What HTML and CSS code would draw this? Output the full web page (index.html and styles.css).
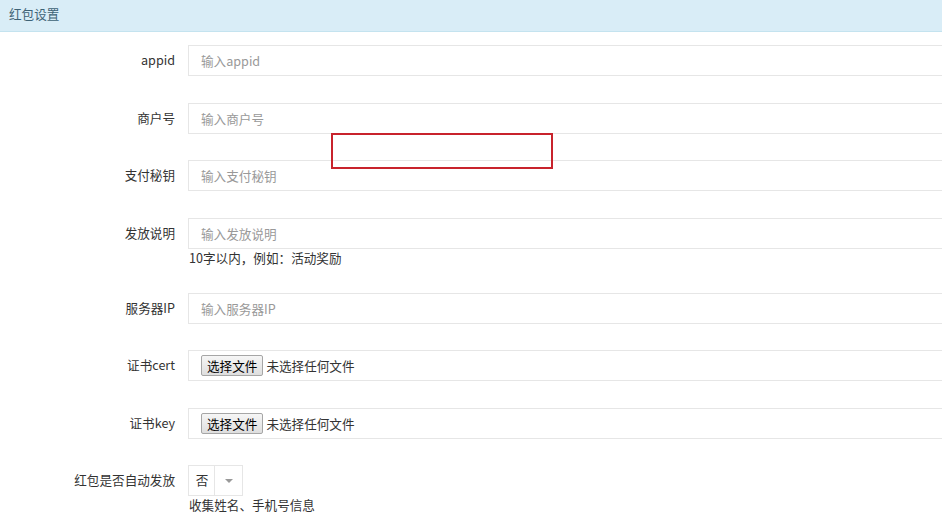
FILE: index.html
```html
<!DOCTYPE html>
<html lang="zh-CN">
<head>
    <meta charset="UTF-8">
    <title>红包设置</title>
    <link rel="stylesheet" href="styles.css">
</head>
<body>
    <div class="panel">
        <div class="panel-heading">红包设置</div>
        <form class="panel-body">
            <div class="form-row">
                <label class="form-label">appid</label>
                <div class="form-field">
                    <input class="form-input" type="text" placeholder="输入appid">
                </div>
            </div>
            <div class="form-row">
                <label class="form-label">商户号</label>
                <div class="form-field">
                    <input class="form-input" type="text" placeholder="输入商户号">
                </div>
            </div>
            <div class="form-row">
                <label class="form-label">支付秘钥</label>
                <div class="form-field">
                    <input class="form-input" type="text" placeholder="输入支付秘钥">
                </div>
            </div>
            <div class="form-row">
                <label class="form-label">发放说明</label>
                <div class="form-field">
                    <input class="form-input" type="text" placeholder="输入发放说明">
                    <div class="help">10字以内，例如：活动奖励</div>
                </div>
            </div>
            <div class="form-row">
                <label class="form-label">服务器IP</label>
                <div class="form-field">
                    <input class="form-input" type="text" placeholder="输入服务器IP">
                </div>
            </div>
            <div class="form-row">
                <label class="form-label">证书cert</label>
                <div class="form-field">
                    <div class="file-box">
                        <button type="button" class="file-btn">选择文件</button>
                        <span class="file-name">未选择任何文件</span>
                    </div>
                </div>
            </div>
            <div class="form-row">
                <label class="form-label">证书key</label>
                <div class="form-field">
                    <div class="file-box">
                        <button type="button" class="file-btn">选择文件</button>
                        <span class="file-name">未选择任何文件</span>
                    </div>
                </div>
            </div>
            <div class="form-row">
                <label class="form-label">红包是否自动发放</label>
                <div class="form-field">
                    <div class="select">
                        <span class="select-value">否</span>
                        <span class="select-arrow"></span>
                    </div>
                    <div class="help">收集姓名、手机号信息</div>
                </div>
            </div>
        </form>
        <!-- 标注框 -->
        <div class="mark-box"></div>
    </div>
</body>
</html>
```

FILE: styles.css
```css
html, body {
    margin: 0;
    padding: 0;
    overflow: hidden;
    background: #fff;
}

body {
    font-family: "Microsoft YaHei", "Noto Sans CJK SC", "Liberation Sans", sans-serif;
    font-size: 12.6px;
    color: #333;
}

.panel {
    position: relative;
}

.panel-heading {
    height: 31px;
    line-height: 28px;
    padding: 0 9px;
    background: #d9edf7;
    border-bottom: 1px solid #c4e3ef;
    color: #3d6275;
}

.panel-body {
    padding-top: 13px;
    margin: 0;
}

.form-row {
    display: flex;
    align-items: flex-start;
    margin-bottom: 26.5px;
}

.form-label {
    width: 175px;
    flex: none;
    text-align: right;
    line-height: 30px;
    padding-right: 13px;
    box-sizing: content-box;
}

.form-field {
    flex: 1;
    min-width: 0;
}

.form-input,
.file-box {
    display: block;
    width: calc(100% + 20px);
    height: 31px;
    box-sizing: border-box;
    border: 1px solid #e6e6e6;
    padding: 0 12px;
    font-family: inherit;
    font-size: 12.6px;
    color: #333;
    outline: none;
}

.form-input::placeholder {
    color: #999;
}

.file-box {
    display: flex;
    align-items: center;
    gap: 3px;
}

.file-btn {
    height: 21px;
    padding: 0 5px;
    border: 1px solid #a6a6a6;
    border-radius: 2px;
    background: linear-gradient(#f6f6f6, #dedede);
    font-family: inherit;
    font-size: 12.6px;
    color: #000;
    line-height: 19px;
}

.file-name {
    color: #333;
}

.help {
    line-height: 17.5px;
    margin-left: 1px;
}

.select {
    display: flex;
    width: 55px;
    height: 31px;
    box-sizing: border-box;
    border: 1px solid #e6e6e6;
}

.select-value {
    width: 24px;
    line-height: 28px;
    text-align: center;
    padding-left: 1px;
    border-right: 1px solid #e6e6e6;
}

.select-arrow {
    flex: 1;
    display: flex;
    align-items: center;
    justify-content: center;
}

.select-arrow::after {
    content: "";
    border-left: 4px solid transparent;
    border-right: 4px solid transparent;
    border-top: 4px solid #999;
}

.mark-box {
    position: absolute;
    left: 331px;
    top: 133px;
    width: 222px;
    height: 36px;
    box-sizing: border-box;
    border: 2px solid #c8232c;
}
```
